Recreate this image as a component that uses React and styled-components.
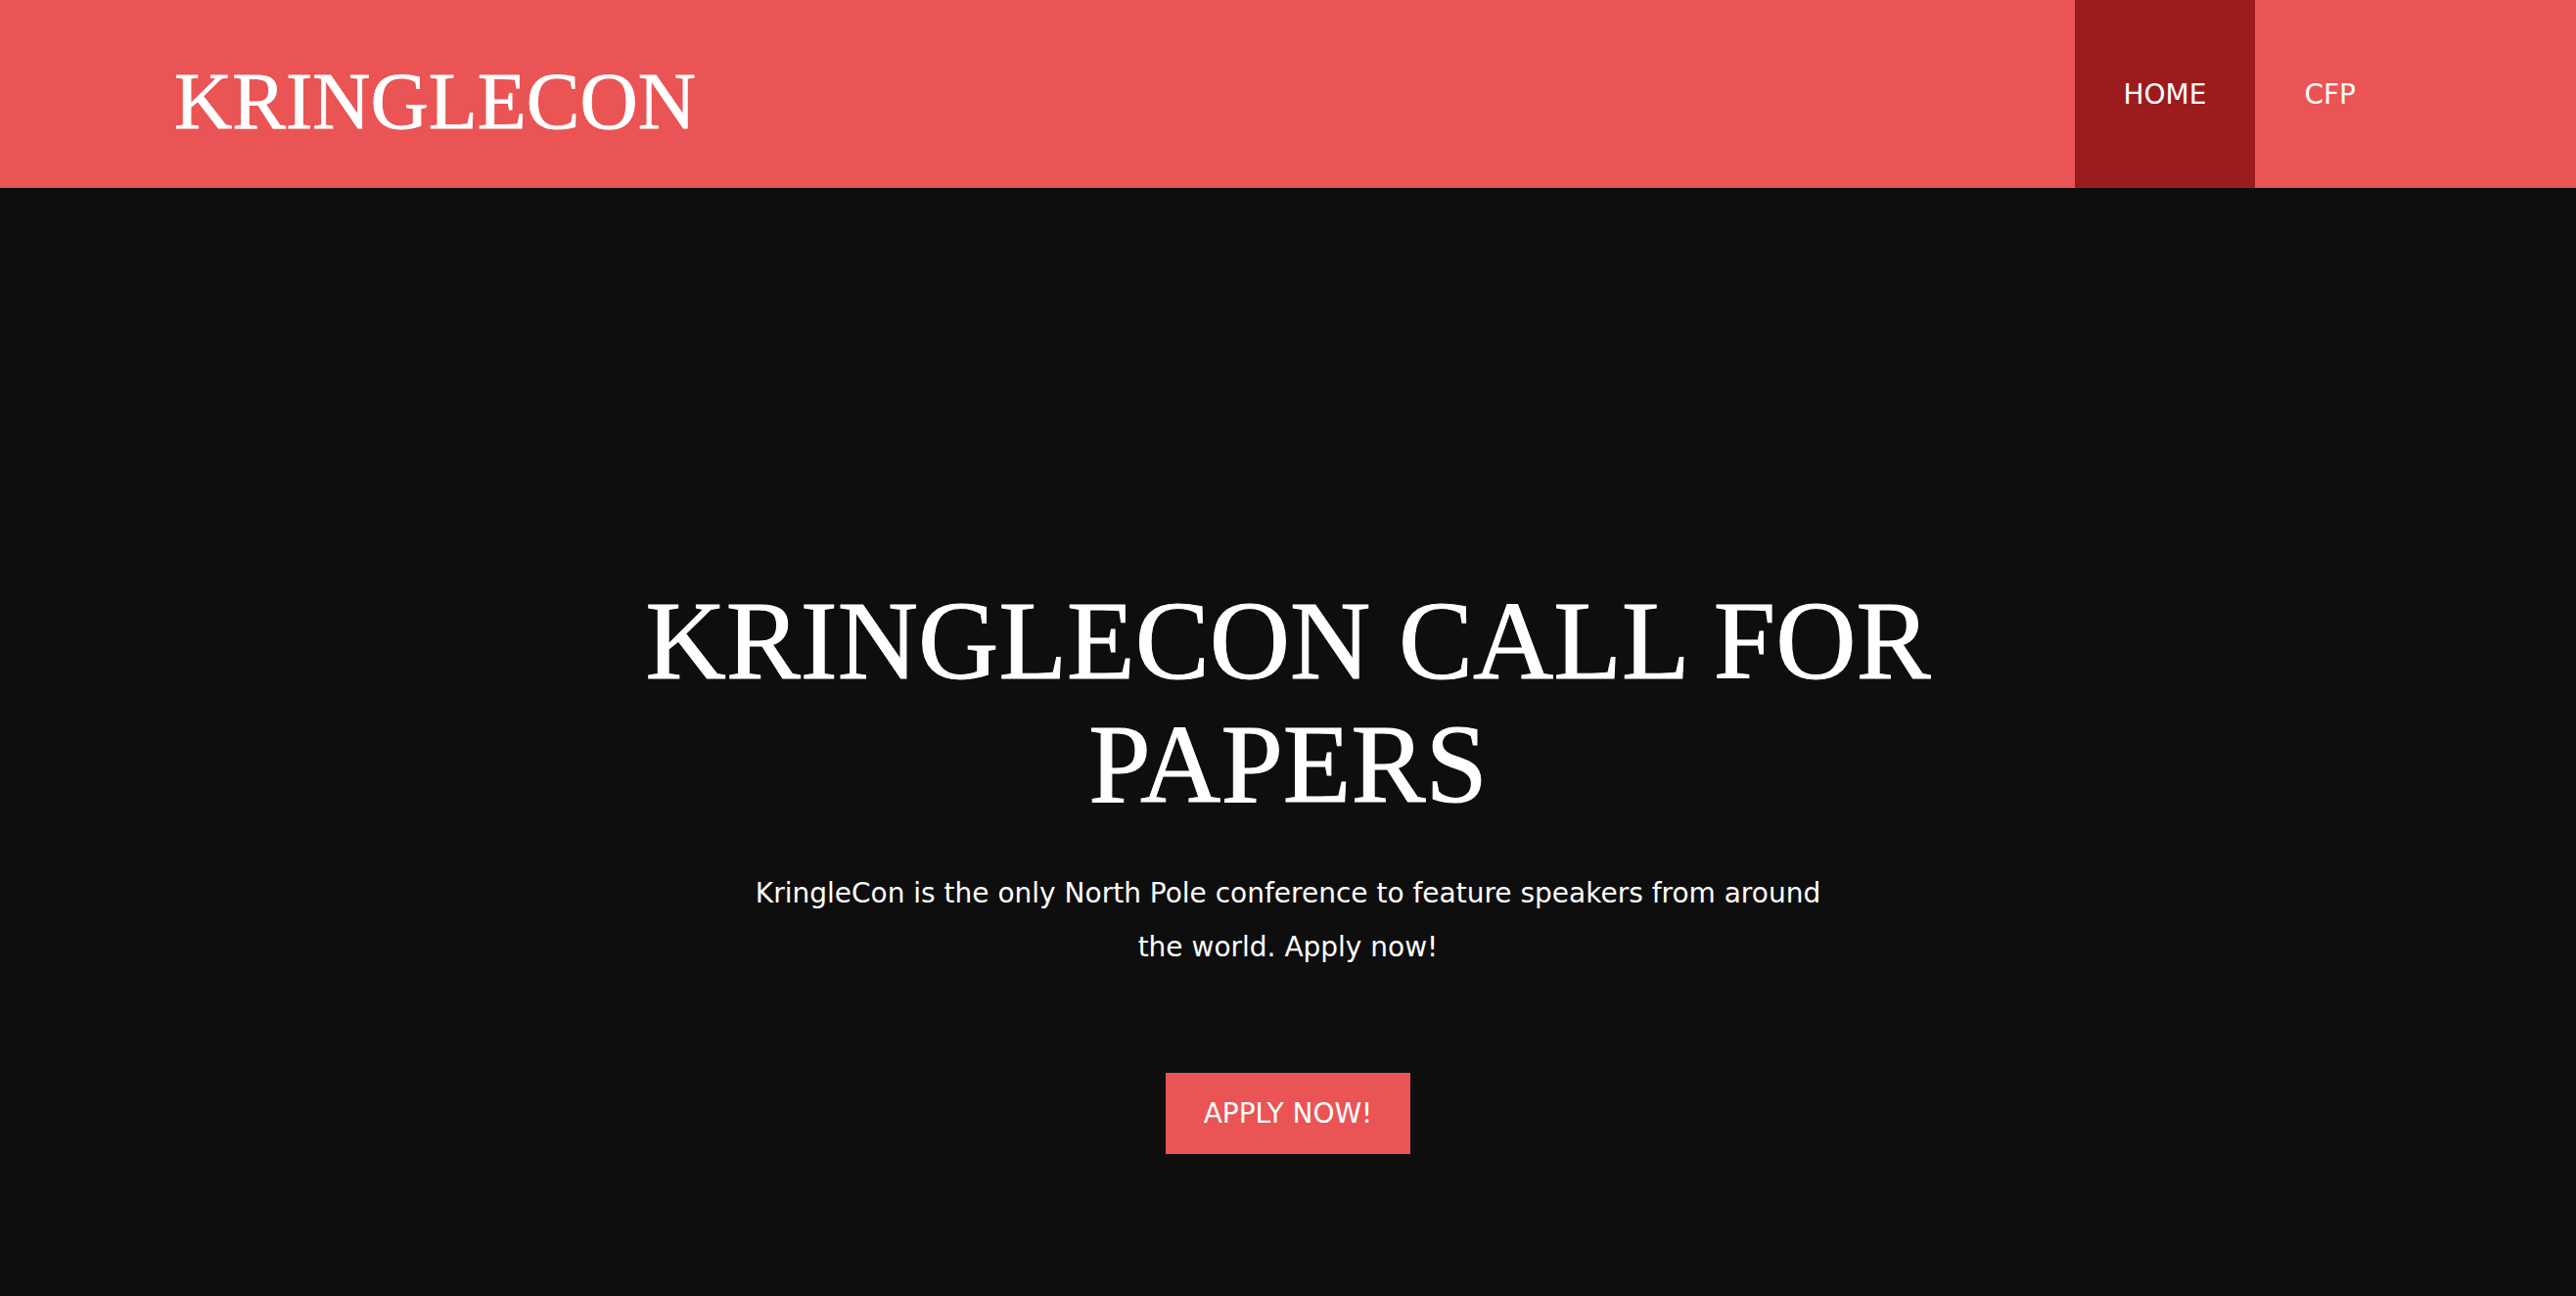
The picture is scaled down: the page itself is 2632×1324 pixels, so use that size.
import styled, { createGlobalStyle } from 'styled-components';

const GlobalStyle = createGlobalStyle`
  html, body {
    margin: 0;
    padding: 0;
    background-color: #0e0e0e;
  }
  body {
    font-family: 'DejaVu Sans', Verdana, sans-serif;
    color: #fff;
  }
`;

const Header = styled.header`
  display: flex;
  align-items: center;
  justify-content: space-between;
  height: 192px;
  padding: 0 175px 0 178px;
  background-color: #ea5455;
`;

const Logo = styled.a`
  margin-top: 16px;
  font-family: 'Liberation Serif', 'Times New Roman', serif;
  font-size: 82px;
  line-height: 1;
  color: #fff;
  text-decoration: none;
  -webkit-text-stroke: 0.8px #fff;
`;

const Nav = styled.nav`
  display: flex;
  align-self: stretch;
`;

const NavItem = styled.a`
  display: flex;
  align-items: center;
  padding: 0 50px;
  font-size: 28px;
  color: #fff;
  text-decoration: none;
  background-color: ${(p) => (p.$active ? '#9c1b1d' : 'transparent')};
`;

const Hero = styled.section`
  display: flex;
  flex-direction: column;
  align-items: center;
  padding: 400px 0 145px;
  text-align: center;
  background-color: #0e0e0e;
`;

const Title = styled.h1`
  max-width: 1400px;
  margin: 0;
  font-family: 'Liberation Serif', 'Times New Roman', serif;
  font-size: 114px;
  font-weight: 400;
  line-height: 126px;
  -webkit-text-stroke: 1px #fff;
`;

const Lead = styled.p`
  max-width: 1110px;
  margin: 41px 0 0;
  font-size: 28px;
  line-height: 55px;
`;

const ApplyButton = styled.a`
  margin-top: 101px;
  padding: 0 39px;
  height: 83px;
  line-height: 83px;
  font-size: 28px;
  color: #fff;
  text-decoration: none;
  background-color: #ea5455;
  box-sizing: border-box;
`;

const App = () => (
  <>
    <GlobalStyle />
    <Header>
      <Logo href="#">KRINGLECON</Logo>
      <Nav>
        <NavItem href="#" $active>
          HOME
        </NavItem>
        <NavItem href="#">CFP</NavItem>
      </Nav>
    </Header>
    <Hero>
      <Title>KRINGLECON CALL FOR PAPERS</Title>
      <Lead>
        KringleCon is the only North Pole conference to feature speakers from
        around the world. Apply now!
      </Lead>
      <ApplyButton href="#">APPLY NOW!</ApplyButton>
    </Hero>
  </>
);

export default App;
